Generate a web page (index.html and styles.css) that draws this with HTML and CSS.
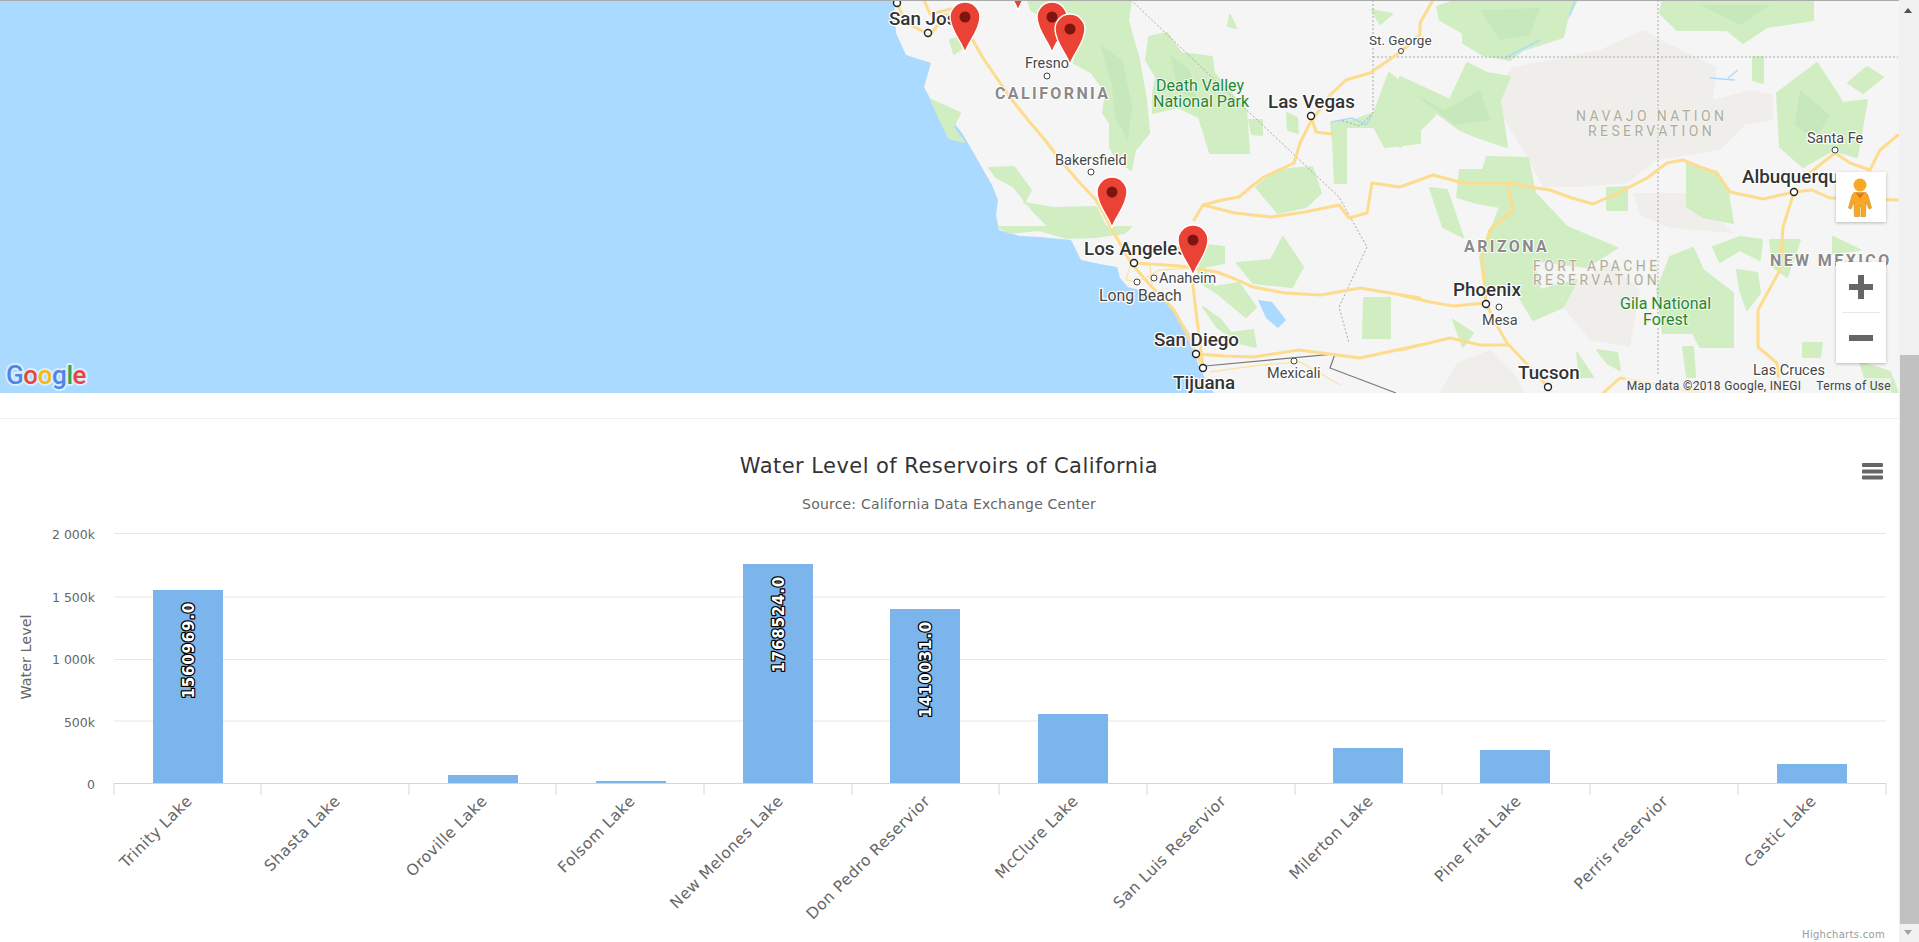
FILE: index.html
```html
<!DOCTYPE html>
<html lang="en">
<head>
    <meta charset="UTF-8">
    <meta name="viewport" content="width=device-width, initial-scale=1.0">
    <title>Water Level of Reservoirs of California</title>
    <link rel="stylesheet" href="styles.css">
</head>
<body>
    <div class="page">
        <section class="map-box">
            <svg class="map" viewBox="0 0 1899 393" width="1899" height="393">
                <g class="base">
                    <rect class="land" x="0" y="0" width="1899" height="393"/>
                    <path class="ocean" d="M0 0H894L896 33 906 55 931 63 924 87 931 100 945 112 962 133 972 150 985 173 992 185 998 200 996 215 999 230 1020 236 1039 237 1071 240 1081 260 1100 264 1117 267 1120 278 1128 287 1150 293 1167 300 1178 316 1189 333 1194 350 1199 367 1206 380 1214 393H0Z"/>

                    <!-- reservations -->
                    <path class="tan" d="M1500 83L1513 67 1560 58 1600 50 1643 30 1667 43 1717 67 1713 100 1750 90 1773 95 1773 120 1745 125 1720 150 1657 160 1627 183 1580 187 1543 187 1527 157 1503 117Z"/>
                    <path class="tan" d="M1633 193H1690L1733 233 1670 228 1640 215Z"/>
                    <path class="tan" d="M1563 293L1610 262 1640 290 1630 347 1590 340 1563 307Z"/>
                    <path class="tan" d="M1457 363L1490 350 1513 372 1525 393H1440Z"/>

                    <!-- parks and forests -->
                    <g class="green-areas">
                        <path d="M1028 0H1131L1128 20 1139 60 1146 100 1149 133 1135 150 1131 170 1117 160 1110 147 1110 123 1103 113 1106 93 1092 73 1074 63 1078 47 1060 27 1031 10Z"/>
                        <path d="M1149 37L1167 33 1181 53 1212 57 1214 73 1230 92 1246 110 1249 153H1210L1199 117 1178 107 1153 113 1153 93 1156 77 1146 60Z"/>
                        <path d="M950 40L958 38 962 48 954 54Z"/>
                        <path d="M931 100L960 113 953 127 964 142 949 138 939 117Z"/>
                        <path d="M989 168L1014 167 1031 190 1024 203 1053 208 1096 207 1106 227 1131 227 1124 233 1096 237 1067 238 1039 230 1010 233 999 227 1017 227 1049 227 1035 213 1024 200 1014 187 996 177Z"/>
                        <path d="M1206 245L1224 247 1224 263 1203 267 1214 287 1239 283 1256 307 1246 317 1217 293 1196 280Z"/>
                        <path d="M1256 187L1278 170 1312 167 1321 193 1306 207 1278 213 1267 200Z"/>
                        <path d="M1237 263L1271 260 1283 237 1303 267 1292 287 1253 283Z"/>
                        <path d="M1364 298H1390V338H1363Z"/>
                        <path d="M1203 307L1221 320 1231 333 1253 330 1256 347 1239 343 1217 327Z"/>
                        <path d="M1331 123L1355 120 1374 113 1389 73 1420 97 1420 143 1385 147 1374 127 1346 127 1346 183 1335 183 1333 143Z"/>
                        <path d="M1287 113L1297 118 1298 133 1288 130ZM1249 120H1262V135L1252 134Z"/>
                        <path d="M1372 10L1392 14 1380 24ZM1230 15L1236 28 1228 26Z"/>
                        <path d="M1437 7L1457 0H1577L1567 20 1563 37 1523 50 1510 60 1483 55 1463 43 1463 33 1440 20Z"/>
                        <path d="M1400 77L1450 100 1467 63 1487 73 1510 77 1500 100 1507 147 1477 137 1460 130 1437 113 1417 133 1400 147Z"/>
                        <path d="M1460 170L1483 170 1487 157 1528 158 1535 193 1567 227 1617 248 1587 267 1533 260 1540 290 1577 280 1563 307 1533 320 1517 293 1485 290 1480 257 1500 207 1477 203 1457 197Z"/>
                        <path d="M1430 188L1447 190 1463 237 1443 227Z"/>
                        <path d="M1670 257L1693 248 1703 270 1733 293 1733 347 1700 347 1693 333 1663 333 1657 290Z"/>
                        <path d="M1663 0H1813V20L1767 27 1743 43 1727 30 1677 30 1660 13Z"/>
                        <path d="M1753 57H1763V83L1753 80Z"/>
                        <path d="M1777 93L1817 63 1843 103 1867 100 1857 157 1833 150 1803 167 1780 147Z"/>
                        <path d="M1848 83L1867 67 1883 77 1863 93Z"/>
                        <path d="M1687 163L1717 172 1728 193 1733 223 1703 217 1687 207Z"/>
                        <path d="M1607 188L1627 187V210H1607Z"/>
                        <path d="M1713 247L1740 237 1762 240 1760 260 1740 250 1720 262Z"/>
                        <path d="M1770 240H1800L1787 277 1773 267Z"/>
                        <path d="M1737 270L1757 273 1760 293 1747 310 1740 290Z"/>
                        <path d="M1803 343H1822L1820 357H1803Z"/>
                        <path d="M1833 237L1860 250 1833 253Z"/>
                        <path d="M1683 347H1693L1695 377H1687Z"/>
                        <path d="M1577 353L1593 377H1580ZM1597 350L1617 353 1620 370 1607 363Z"/>
                        <path d="M1453 320L1473 333 1463 347ZM1860 362L1890 372 1898 393H1870Z"/>
                    </g>
                    <!-- darker ridges -->
                    <path class="ridge" d="M1100 45L1122 60 1132 105 1128 140 1115 118 1112 85ZM1170 55L1190 70 1196 100 1178 90ZM1415 95L1445 110 1480 90 1490 120 1455 125ZM1480 10L1540 8 1530 35 1500 40ZM1700 5L1770 5 1740 25ZM1800 90L1830 115 1815 140 1795 125Z"/>

                    <!-- water -->
                    <path class="ocean" d="M1258 300L1272 302 1286 320 1278 328 1266 318Z"/>
                    <path class="ocean" d="M1068 267L1080 268 1070 274ZM1040 265L1062 264 1048 271ZM1118 305L1128 308 1124 314ZM1116 335L1126 350 1122 344Z"/>
                    <path class="water-line" d="M1331 122L1352 118 1366 125 1372 115M1505 58L1540 40M1575 0L1570 15M1710 78L1735 80M1728 78L1738 70"/>

                    <!-- state lines -->
                    <path class="state" d="M1131 0L1220 85 1339 197 1367 247 1339 307 1349 343M1373 0V113L1360 126 1340 120M1373 57H1898M1658 0V375"/>
                    <path class="border" d="M1205 366L1335 354 1330 368 1396 393"/>

                    <!-- roads -->
                    <g class="roads">
                        <path d="M971 37L983 58 996 77 1012 100 1028 120 1045 140 1060 160 1080 183 1096 200 1106 218 1114 233 1131 263 1150 285 1174 310 1186 332 1196 353 1203 367"/>
                        <path d="M896 0L905 22 930 35 945 15 975 10M924 0L930 14 968 5"/>
                        <path d="M1135 263L1180 266 1217 272 1235 279 1253 287 1285 293 1321 295 1360 288 1420 298M1400 295L1430 302 1453 306 1486 303 1495 322 1507 343 1525 362 1548 387"/>
                        <path d="M1194 220L1203 205 1222 200 1239 197 1252 186 1264 177 1294 163 1300 143 1310 123 1330 95 1346 80 1370 73 1399 53 1420 35 1420 23 1433 0"/>
                        <path d="M1203 205L1235 213 1271 217 1305 212 1339 205 1349 218 1367 213 1372 183 1400 187 1433 175 1463 183 1510 183 1530 187 1550 190 1572 198 1593 204 1620 192 1647 178 1667 163 1683 160 1700 167 1717 173 1730 192 1763 199 1794 192 1812 190 1830 198 1898 200"/>
                        <path d="M1508 187L1513 210 1490 230 1482 257 1486 303"/>
                        <path d="M1400 350L1450 338 1480 345 1507 345"/>
                        <path d="M1794 192L1783 227 1780 270 1758 310 1758 347 1777 363 1780 393"/>
                        <path d="M1797 183L1835 153 1850 163 1870 170 1880 150 1898 135"/>
                        <path d="M1192 277L1197 320 1203 367"/>
                        <path d="M1196 354L1225 356 1253 357 1299 350 1360 358 1420 345"/>
                        <path d="M1603 393L1620 378 1660 385 1700 393"/>
                        <path d="M1311 116L1316 132 1332 134"/>
                    </g>
                    <g class="roads-thin">
                        <path d="M1131 263L1126 280 1137 282 1160 270 1190 268M1150 265L1152 285M1210 372L1260 365 1300 362 1340 385"/>
                    </g>
                </g>

                <!-- town dots -->
                <g class="dots">
                    <circle cx="897" cy="3" r="3.5"/><circle cx="928" cy="33" r="3.5"/>
                    <circle cx="1311" cy="116" r="3.5"/><circle cx="1134" cy="263" r="3.5"/>
                    <circle cx="1196" cy="354" r="3.5"/><circle cx="1203" cy="368" r="3.5"/>
                    <circle cx="1486" cy="304" r="3.5"/><circle cx="1794" cy="192" r="3.5"/>
                    <circle cx="1548" cy="387" r="3.5"/>
                </g>
                <g class="dots-small">
                    <circle cx="1047" cy="76" r="3"/><circle cx="1401" cy="51" r="2.5"/>
                    <circle cx="1091" cy="172" r="3"/><circle cx="1154" cy="278" r="3"/>
                    <circle cx="1137" cy="282" r="3"/><circle cx="1294" cy="361" r="3"/>
                    <circle cx="1835" cy="150" r="3"/><circle cx="1499" cy="307" r="3"/>
                </g>

                <!-- labels -->
                <text class="city-lg" x="889" y="25">San Jose</text>
                <text class="city-lg" x="1268" y="108">Las Vegas</text>
                <text class="city-lg" x="1084" y="255">Los Angeles</text>
                <text class="city-lg" x="1154" y="346">San Diego</text>
                <text class="city-lg" x="1173" y="389">Tijuana</text>
                <text class="city-lg" x="1742" y="183">Albuquerque</text>
                <text class="city-lg" x="1453" y="296">Phoenix</text>
                <text class="city-lg" x="1518" y="379">Tucson</text>
                <text class="city" x="1025" y="68">Fresno</text>
                <text class="city city-st" x="1369" y="45">St. George</text>
                <text class="city" x="1055" y="165">Bakersfield</text>
                <text class="city" x="1159" y="283">Anaheim</text>
                <text class="city city-lb" x="1099" y="301">Long Beach</text>
                <text class="city" x="1267" y="378">Mexicali</text>
                <text class="city" x="1807" y="143">Santa Fe</text>
                <text class="city" x="1482" y="325">Mesa</text>
                <text class="city" x="1753" y="375">Las Cruces</text>
                <text class="region" x="995" y="99">CALIFORNIA</text>
                <text class="region" x="1464" y="252">ARIZONA</text>
                <text class="region" x="1770" y="266">NEW MEXICO</text>
                <text class="park" x="1156" y="91">Death Valley</text>
                <text class="park" x="1153" y="107">National Park</text>
                <text class="park" x="1620" y="309">Gila National</text>
                <text class="park" x="1643" y="325">Forest</text>
                <text class="reserve" x="1576" y="121">NAVAJO NATION</text>
                <text class="reserve" x="1588" y="136">RESERVATION</text>
                <text class="reserve" x="1533" y="271">FORT APACHE</text>
                <text class="reserve" x="1533" y="285">RESERVATION</text>

                <text class="logo" x="6" y="384"><tspan class="g-blue">G</tspan><tspan class="g-red">o</tspan><tspan class="g-yellow">o</tspan><tspan class="g-blue">g</tspan><tspan class="g-green">l</tspan><tspan class="g-red">e</tspan></text>

                <!-- markers -->
                <defs>
                    <g id="pin">
                        <path class="pin-body" d="M0 36C-2 26 -15 14 -15 0A15 15 0 0 1 15 0C15 14 2 26 0 36Z"/>
                        <circle class="pin-dot" cx="0" cy="0" r="5.5"/>
                    </g>
                </defs>
                <use href="#pin" x="1018" y="-25"/>
                <use href="#pin" x="965" y="17"/>
                <use href="#pin" x="1052" y="17"/>
                <use href="#pin" x="1070" y="29"/>
                <use href="#pin" x="1112" y="192"/>
                <use href="#pin" x="1193" y="240"/>
            </svg>
            <div class="top-line"></div>

            <button class="map-btn pegman-btn" type="button" aria-label="Street View">
                <svg viewBox="0 0 50 50" width="50" height="50">
                    <circle class="peg-fill" cx="24" cy="13" r="6.5"/>
                    <path class="peg-fill peg-edge" d="M19 20.5C17.5 20.5 16.5 22 15.5 25L12.5 36 15 37 18 29.5 18.5 44.5H23.5V34.5H25V44.5H29.5L30 29.5 33 37 35.5 36 32.5 25C31.5 22 30.5 20.5 29 20.5Z"/>
                    <path class="peg-collar" d="M19.5 20.5L24 26.5 28.5 20.5 24 22Z"/>
                </svg>
            </button>
            <div class="zoom-ctrl">
                <button class="map-btn zoom-btn" type="button" aria-label="Zoom in">
                    <svg viewBox="0 0 24 24" width="24" height="24"><path class="zoom-glyph" d="M9 0H15V9H24V15H15V24H9V15H0V9H9Z"/></svg>
                </button>
                <div class="zoom-sep"></div>
                <button class="map-btn zoom-btn" type="button" aria-label="Zoom out">
                    <svg viewBox="0 0 24 24" width="24" height="24"><path class="zoom-glyph" d="M0 9H24V15H0Z"/></svg>
                </button>
            </div>
            <div class="attribution">
                <span>Map data ©2018 Google, INEGI</span>
                <span>Terms of Use</span>
            </div>
        </section>

        <hr class="divider">

        <section class="chart-box">
            <svg class="chart" viewBox="0 420 1899 522" width="1899" height="522">
                <text class="chart-title" x="949" y="473">Water Level of Reservoirs of California</text>
                <text class="chart-subtitle" x="949" y="509">Source: California Data Exchange Center</text>

                <g class="menu-icon">
                    <rect x="1862" y="463" width="21" height="4" rx="1"/>
                    <rect x="1862" y="469.5" width="21" height="4" rx="1"/>
                    <rect x="1862" y="475.5" width="21" height="4" rx="1"/>
                </g>

                <g class="grid">
                    <path d="M114 533.5H1886"/>
                    <path d="M114 597H1886"/>
                    <path d="M114 659.5H1886"/>
                    <path d="M114 721H1886"/>
                </g>

                <g class="y-labels">
                    <text x="95" y="539">2 000k</text>
                    <text x="95" y="602">1 500k</text>
                    <text x="95" y="664">1 000k</text>
                    <text x="95" y="727">500k</text>
                    <text x="95" y="789">0</text>
                </g>
                <text class="y-title" transform="rotate(-90 31 657)" x="31" y="657">Water Level</text>

                <g class="bars">
                    <rect x="153" y="590" width="70" height="193"/>
                    <rect x="448" y="775" width="70" height="8"/>
                    <rect x="596" y="781" width="70" height="2"/>
                    <rect x="743" y="564" width="70" height="219"/>
                    <rect x="890" y="609" width="70" height="174"/>
                    <rect x="1038" y="714" width="70" height="69"/>
                    <rect x="1333" y="748" width="70" height="35"/>
                    <rect x="1480" y="750" width="70" height="33"/>
                    <rect x="1777" y="764" width="70" height="19"/>
                </g>

                <g class="axis">
                    <path d="M114 783.5H1886"/>
                    <path d="M114 783V795M261 783V795M409 783V795M556 783V795M704 783V795M852 783V795M999 783V795M1147 783V795M1295 783V795M1442 783V795M1590 783V795M1738 783V795M1886 783V795"/>
                </g>

                <g class="data-labels">
                    <text transform="rotate(-90 194 602)" x="194" y="602">1560969.0</text>
                    <text transform="rotate(-90 784 576)" x="784" y="576">1768524.0</text>
                    <text transform="rotate(-90 931 621)" x="931" y="621">1410031.0</text>
                </g>

                <g class="x-labels">
                    <text transform="rotate(-45 193 802)" x="193" y="802">Trinity Lake</text>
                    <text transform="rotate(-45 341 802)" x="341" y="802">Shasta Lake</text>
                    <text transform="rotate(-45 488 802)" x="488" y="802">Oroville Lake</text>
                    <text transform="rotate(-45 636 802)" x="636" y="802">Folsom Lake</text>
                    <text transform="rotate(-45 784 802)" x="784" y="802">New Melones Lake</text>
                    <text transform="rotate(-45 931 802)" x="931" y="802">Don Pedro Reservior</text>
                    <text transform="rotate(-45 1079 802)" x="1079" y="802">McClure Lake</text>
                    <text transform="rotate(-45 1227 802)" x="1227" y="802">San Luis Reservior</text>
                    <text transform="rotate(-45 1374 802)" x="1374" y="802">Milerton Lake</text>
                    <text transform="rotate(-45 1522 802)" x="1522" y="802">Pine Flat Lake</text>
                    <text transform="rotate(-45 1669 802)" x="1669" y="802">Perris reservior</text>
                    <text transform="rotate(-45 1817 802)" x="1817" y="802">Castic Lake</text>
                </g>

                <text class="credits" x="1885" y="938">Highcharts.com</text>
            </svg>
        </section>
    </div>

    <aside class="scrollbar">
        <div class="arrow arrow-up"></div>
        <div class="scroll-track">
            <div class="scroll-thumb"></div>
        </div>
        <div class="arrow arrow-down"></div>
    </aside>
</body>
</html>
```

FILE: styles.css
```css
body {
    margin: 0;
    display: flex;
    height: 100vh;
    overflow: hidden;
    background: #fff;
    font-family: "DejaVu Sans", sans-serif;
}

.page {
    width: 1899px;
    flex-shrink: 0;
}

/* Map */
.map-box {
    position: relative;
    height: 393px;
    overflow: hidden;
}

.map,
.chart {
    display: block;
}

.base {
    filter: blur(0.5px);
}

.top-line {
    position: absolute;
    top: 0;
    left: 0;
    right: 0;
    height: 1px;
    background: #aaa;
}

.land { fill: #f5f5f5; }
.ocean { fill: #aadaff; }
.tan { fill: #f0eeea; }

.green-areas path {
    fill: #d0eec2;
    stroke: #d0eec2;
    stroke-width: 2;
    stroke-linejoin: round;
}

.ridge {
    fill: #c2e4b4;
    opacity: 0.6;
}

.water-line {
    fill: none;
    stroke: #aadaff;
    stroke-width: 1.5;
}

.state {
    fill: none;
    stroke: #a8a8a8;
    stroke-width: 1;
    stroke-dasharray: 2 2;
}

.border {
    fill: none;
    stroke: #777;
    stroke-width: 1.2;
}

.roads path {
    fill: none;
    stroke: #fddc8e;
    stroke-width: 3;
    stroke-linejoin: round;
    stroke-linecap: round;
}

.roads-thin path {
    fill: none;
    stroke: #fde4a6;
    stroke-width: 1.4;
}

.dots circle,
.dots-small circle {
    fill: #fff;
    stroke: #222;
    stroke-width: 1.4;
}

.dots-small circle {
    stroke: #444;
    stroke-width: 1;
}

.city-lg,
.city,
.region,
.park,
.reserve,
.logo {
    font-family: Roboto, sans-serif;
    paint-order: stroke;
    stroke: #fff;
    stroke-width: 2.5px;
    stroke-linejoin: round;
}

.city-lg {
    font-size: 18.8px;
    font-weight: 500;
    fill: #333;
}

.city {
    font-size: 14.5px;
    fill: #484848;
}

.city-st {
    font-size: 13.5px;
}

.city-lb {
    font-size: 15.8px;
}

.region {
    font-size: 16px;
    font-weight: 700;
    letter-spacing: 2.4px;
    fill: #8a8a8a;
    stroke-width: 2px;
}

.park {
    font-size: 16px;
    fill: #1f8a2d;
    stroke-width: 2px;
    stroke: #f5f5f5;
}

.reserve {
    font-size: 14px;
    letter-spacing: 3.4px;
    fill: #aeae98;
    stroke-width: 2px;
    stroke: #f3f3f3;
}

.logo {
    font-size: 26px;
    font-weight: 500;
    letter-spacing: -0.4px;
    stroke: #d8edff;
    stroke-width: 4px;
}

.g-blue { fill: #4d86e8; }
.g-red { fill: #e8453c; }
.g-yellow { fill: #f8b90c; }
.g-green { fill: #2fa652; }

.pin-body {
    fill: #ea4335;
    stroke: #fff;
    stroke-width: 1.4;
}

.pin-dot { fill: #7d1410; }

/* Map controls */
.map-btn {
    display: flex;
    align-items: center;
    justify-content: center;
    padding: 0;
    border: none;
    background: #fff;
}

.pegman-btn {
    position: absolute;
    top: 172px;
    left: 1836px;
    width: 50px;
    height: 50px;
    box-shadow: 0 1px 3px rgba(0, 0, 0, 0.25);
}

.peg-fill { fill: #f9a825; }
.peg-edge { stroke: #c98a1a; stroke-width: 0.6; }
.peg-collar { fill: #e2711d; }

.zoom-ctrl {
    position: absolute;
    top: 262px;
    left: 1836px;
    width: 50px;
    height: 101px;
    background: #fff;
    box-shadow: 0 1px 3px rgba(0, 0, 0, 0.25);
}

.zoom-btn {
    width: 50px;
    height: 50px;
}

.zoom-sep {
    height: 1px;
    margin: 0 6px;
    background: #e6e6e6;
}

.zoom-glyph { fill: #666; }

.attribution {
    position: absolute;
    right: 8px;
    bottom: 0;
    display: flex;
    gap: 15px;
    height: 15px;
    padding-left: 2px;
    align-items: center;
    font-family: Roboto, sans-serif;
    font-size: 12px;
    letter-spacing: 0.3px;
    color: #444;
    background: rgba(245, 245, 245, 0.7);
}

/* Chart */
.divider {
    height: 1px;
    margin: 25px 0 1px;
    border: none;
    background: #eee;
}

.chart-title {
    font-size: 21px;
    letter-spacing: 0.45px;
    fill: #333;
    text-anchor: middle;
}

.chart-subtitle {
    font-size: 14px;
    letter-spacing: 0.2px;
    fill: #666;
    text-anchor: middle;
}

.menu-icon rect { fill: #666; }

.grid path {
    fill: none;
    stroke: #e6e6e6;
    stroke-width: 1;
}

.y-labels text {
    font-size: 12.5px;
    fill: #666;
    text-anchor: end;
}

.y-title {
    font-size: 14.4px;
    fill: #666;
    text-anchor: middle;
}

.bars rect { fill: #7cb5ec; }

.axis path {
    fill: none;
    stroke: #ccd6eb;
    stroke-width: 1;
}

.data-labels text {
    font-size: 15px;
    font-weight: 700;
    letter-spacing: 0.8px;
    fill: #fff;
    stroke: #000;
    stroke-width: 2.5px;
    stroke-linejoin: round;
    paint-order: stroke;
    text-anchor: end;
}

.x-labels text {
    font-size: 15.5px;
    letter-spacing: 0.5px;
    fill: #666;
    text-anchor: end;
}

.credits {
    font-size: 10px;
    letter-spacing: 0.3px;
    fill: #999;
    text-anchor: end;
}

/* Scrollbar */
.scrollbar {
    display: flex;
    flex-direction: column;
    width: 20px;
    background: #f1f1f1;
}

.scroll-track {
    flex: 1;
    padding: 337px 0 0 1px;
}

.scroll-thumb {
    height: 569px;
    background: #c1c1c1;
}

.arrow {
    position: relative;
    height: 18px;
}

.arrow-up::after,
.arrow-down::after {
    content: "";
    position: absolute;
    left: 5px;
    border-left: 4.5px solid transparent;
    border-right: 4.5px solid transparent;
}

.arrow-up::after {
    top: 8px;
    border-bottom: 5px solid #505050;
}

.arrow-down::after {
    top: 6px;
    border-top: 5px solid #a3a3a3;
}
```
